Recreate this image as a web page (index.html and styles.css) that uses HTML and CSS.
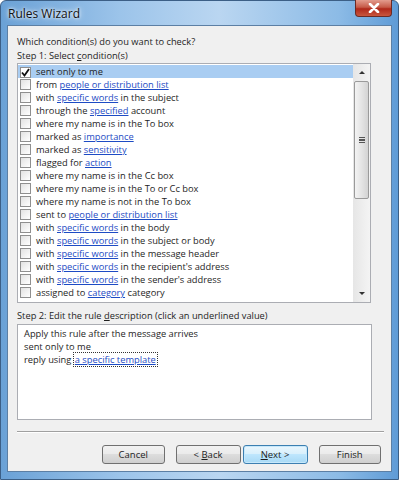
FILE: index.html
```html
<!DOCTYPE html>
<html lang="en">
<head>
    <meta charset="UTF-8">
    <title>Rules Wizard</title>
    <link rel="stylesheet" href="styles.css">
</head>
<body>
    <div class="window">
        <div class="titlebar">
            <span class="title">Rules Wizard</span>
            <div class="close-btn">
                <svg width="14" height="10" viewBox="0 0 14 10">
                    <path d="M3 1 L11 9 M11 1 L3 9" stroke="#fff" stroke-width="2.6" stroke-linecap="round"/>
                </svg>
            </div>
        </div>
        <div class="client">
            <div class="question">Which condition(s) do you want to check?</div>
            <div class="step">Step 1: Select <u>c</u>ondition(s)</div>
            <div class="listbox">
                <div class="items">
                    <div class="row selected"><span class="check on">
                        <svg width="9" height="9" viewBox="0 0 9 9"><path d="M1 4.5 L3.5 7.5 L8 1" stroke="#111" stroke-width="1.8" fill="none"/></svg>
                    </span>sent only to me</div>
                    <div class="row"><span class="check"></span>from <a>people or distribution list</a></div>
                    <div class="row"><span class="check"></span>with <a>specific words</a> in the subject</div>
                    <div class="row"><span class="check"></span>through the <a>specified</a> account</div>
                    <div class="row"><span class="check"></span>where my name is in the To box</div>
                    <div class="row"><span class="check"></span>marked as <a>importance</a></div>
                    <div class="row"><span class="check"></span>marked as <a>sensitivity</a></div>
                    <div class="row"><span class="check"></span>flagged for <a>action</a></div>
                    <div class="row"><span class="check"></span>where my name is in the Cc box</div>
                    <div class="row"><span class="check"></span>where my name is in the To or Cc box</div>
                    <div class="row"><span class="check"></span>where my name is not in the To box</div>
                    <div class="row"><span class="check"></span>sent to <a>people or distribution list</a></div>
                    <div class="row"><span class="check"></span>with <a>specific words</a> in the body</div>
                    <div class="row"><span class="check"></span>with <a>specific words</a> in the subject or body</div>
                    <div class="row"><span class="check"></span>with <a>specific words</a> in the message header</div>
                    <div class="row"><span class="check"></span>with <a>specific words</a> in the recipient's address</div>
                    <div class="row"><span class="check"></span>with <a>specific words</a> in the sender's address</div>
                    <div class="row"><span class="check"></span>assigned to <a>category</a> category</div>
                </div>
                <div class="scrollbar">
                    <div class="arrow up"></div>
                    <div class="track">
                        <div class="thumb"><span class="grip"></span></div>
                    </div>
                    <div class="arrow down"></div>
                </div>
            </div>
            <div class="step step2">Step 2: Edit the rule <u>d</u>escription (click an underlined value)</div>
            <div class="description">
                <div>Apply this rule after the message arrives</div>
                <div>sent only to me</div>
                <div>reply using <a class="focused">a specific template</a></div>
            </div>
            <div class="separator"></div>
            <div class="buttons">
                <button class="btn">Cancel</button>
                <div class="pair">
                    <button class="btn">&lt; <u>B</u>ack</button>
                    <button class="btn default"><u>N</u>ext &gt;</button>
                </div>
                <button class="btn">Finish</button>
            </div>
        </div>
    </div>
</body>
</html>
```

FILE: styles.css
```css
* {
    margin: 0;
    padding: 0;
    box-sizing: border-box;
}
body {
    font-family: "Open Sans", "Noto Sans", sans-serif;
    font-size: 9.3px;
    color: #1e1e1e;
    background: #fff;
}
.window {
    width: 399px;
    height: 480px;
    display: flex;
    flex-direction: column;
    background: linear-gradient(to right, #6aa1d6 0%, #9cc4ea 30%, #bad6f1 55%, #8cbbe6 85%, #5f9bd6 100%);
    border: 1px solid #3c5f86;
    border-radius: 6px 6px 0 0;
    padding: 0 6px 7px 6px;
}
.titlebar {
    height: 24px;
    display: flex;
    align-items: center;
    justify-content: space-between;
}
.title {
    font-size: 12px;
    color: #111;
    padding-left: 1px;
    padding-top: 1px;
    text-shadow: 0 0 6px #fff, 0 0 3px #fff;
}
.close-btn {
    align-self: flex-start;
    width: 37px;
    height: 17px;
    margin-top: -1px;
    border: 1px solid #6b2a24;
    border-top: none;
    border-radius: 0 0 4px 4px;
    background: linear-gradient(#e39c8e, #c65a48 45%, #b0281a 55%, #c8563e);
    display: flex;
    align-items: center;
    justify-content: center;
}
.client {
    flex: 1;
    background: #f0f0f0;
    border: 1px solid #5c7fa4;
    padding: 9px 10px 0 9px;
    display: flex;
    flex-direction: column;
}
.question {
    height: 13px;
    line-height: 13px;
}
.step {
    height: 13px;
    line-height: 13px;
    margin-top: 1px;
}
.listbox {
    margin-top: 1px;
    width: 354px;
    height: 240px;
    border: 1px solid #abadb3;
    background: #fff;
    display: flex;
}
.items {
    flex: 1;
    padding-top: 1px;
    overflow: hidden;
}
.row {
    height: 13px;
    line-height: 13px;
    padding-left: 2px;
    white-space: nowrap;
}
.row.selected {
    background: #a9cdf2;
}
.check {
    display: inline-flex;
    width: 11px;
    height: 11px;
    border: 1px solid #8f8f8f;
    background: linear-gradient(135deg, #e2e2e2, #ffffff);
    margin-right: 5px;
    vertical-align: -2px;
    align-items: center;
    justify-content: center;
}
.check.on {
    background: #fff;
}
a {
    color: #1d4bc4;
    text-decoration: underline;
}
.scrollbar {
    width: 17px;
    display: flex;
    flex-direction: column;
    background: linear-gradient(to right, #e6e6e6, #f4f4f4);
}
.arrow {
    height: 17px;
    display: flex;
    align-items: center;
    justify-content: center;
}
.arrow::before {
    content: "";
    border-left: 3px solid transparent;
    border-right: 3px solid transparent;
}
.arrow.up::before {
    border-bottom: 3px solid #333;
}
.arrow.down::before {
    border-top: 3px solid #333;
}
.track {
    flex: 1;
    padding: 0 1px;
}
.thumb {
    height: 118px;
    border: 1px solid #9a9a9a;
    border-radius: 2px;
    background: linear-gradient(to right, #f3f3f3, #e4e4e4 50%, #d3d3d3);
    display: flex;
    align-items: center;
    justify-content: center;
}
.grip {
    width: 6px;
    height: 6px;
    border-top: 1px solid #555;
    border-bottom: 1px solid #555;
    position: relative;
}
.grip::after {
    content: "";
    position: absolute;
    left: 0;
    right: 0;
    top: 1px;
    border-top: 1px solid #555;
    border-bottom: 1px solid #555;
    height: 0;
}
.step2 {
    margin-top: 6px;
}
.description {
    margin-top: 2px;
    width: 355px;
    height: 96px;
    border: 1px solid #abadb3;
    background: #fff;
    padding: 2px 6px;
    line-height: 13px;
}
.focused {
    outline: 1px dotted #333;
    outline-offset: 0;
    padding: 0 1px;
}
.separator {
    margin-top: 11px;
    width: 367px;
    border-top: 1px solid #a0a0a0;
    border-bottom: 1px solid #fff;
}
.buttons {
    margin-top: 12px;
    display: flex;
    gap: 11px;
    padding-left: 85px;
}
.pair {
    display: flex;
    gap: 2px;
}
.btn {
    width: 65px;
    height: 19px;
    font-family: inherit;
    font-size: 9.5px;
    color: #1e1e1e;
    border: 1px solid #707070;
    border-radius: 3px;
    background: linear-gradient(#f2f2f2, #ebebeb 45%, #dddddd 50%, #cfcfcf);
}
.btn.default {
    border-color: #3c7fb1;
    background: linear-gradient(#eaf6fd, #d9f0fc 45%, #bee6fd 50%, #a7d9f5);
    box-shadow: inset 0 0 0 1px #c6e8fb;
}
```
